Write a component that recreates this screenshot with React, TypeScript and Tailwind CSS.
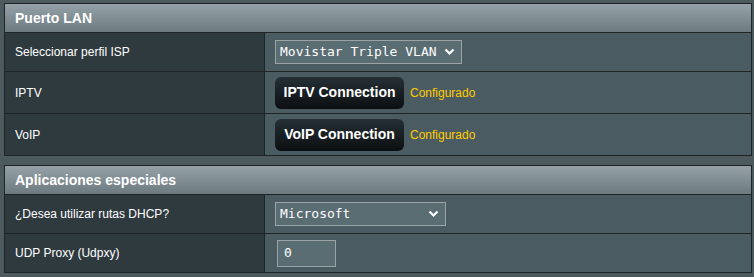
import { ReactNode } from "react";

function Chevron() {
  return (
    <svg width="11" height="8" viewBox="0 0 11 8" className="shrink-0">
      <path d="M1.5 1.5 L5.5 5.5 L9.5 1.5" fill="none" stroke="#ffffff" strokeWidth="2.2" />
    </svg>
  );
}

function Row({ label, h, children }: { label: string; h: string; children: ReactNode }) {
  return (
    <div className={`flex border-t border-[#1f2427] ${h}`}>
      <div className="w-[260px] shrink-0 bg-[#2f3a3f] border-r border-[#1f2427] flex items-center pl-[10px] text-[12px] text-white">
        {label}
      </div>
      <div className="flex-1 bg-[#4a5b61] flex items-center pl-[10px] gap-[6px]">{children}</div>
    </div>
  );
}

function Header({ title }: { title: string }) {
  return (
    <div className="h-[28px] bg-gradient-to-b from-[#95a1a6] to-[#6d7b80] flex items-center pl-[10px] text-[14px] font-bold text-white">
      {title}
    </div>
  );
}

function Select({ value, w }: { value: string; w: string }) {
  return (
    <div
      className={`${w} h-[24px] border border-[#9aa3a6] bg-[#5a6d73] flex items-center justify-between pl-[4px] pr-[6px] text-[13px] text-white`}
      style={{ fontFamily: '"DejaVu Sans Mono", "Liberation Mono", monospace' }}
    >
      <span>{value}</span>
      <Chevron />
    </div>
  );
}

function ConnButton({ label }: { label: string }) {
  return (
    <>
      <div className="w-[129px] h-[32px] rounded-[6px] bg-gradient-to-b from-[#253036] to-[#0c0f11] flex items-center justify-center text-[14px] font-bold text-white whitespace-nowrap">
        {label}
      </div>
      <span className="text-[12px] text-[#ffcc00]">Configurado</span>
    </>
  );
}

export default function App() {
  return (
    <div
      className="w-[754px] h-[277px] bg-[#4c595d] pt-[3px] pl-[4px] pr-[2px] flex flex-col gap-[9px]"
      style={{ fontFamily: '"Liberation Sans", Arial, sans-serif' }}
    >
      <div className="border border-[#1f2427]">
        <Header title="Puerto LAN" />
        <Row label="Seleccionar perfil ISP" h="h-[39px]">
          <Select value="Movistar Triple VLAN" w="w-[187px]" />
        </Row>
        <Row label="IPTV" h="h-[42px]">
          <ConnButton label="IPTV Connection" />
        </Row>
        <Row label="VoIP" h="h-[42px]">
          <ConnButton label="VoIP Connection" />
        </Row>
      </div>
      <div className="border border-[#1f2427]">
        <Header title="Aplicaciones especiales" />
        <Row label="¿Desea utilizar rutas DHCP?" h="h-[39px]">
          <Select value="Microsoft" w="w-[171px]" />
        </Row>
        <Row label="UDP Proxy (Udpxy)" h="h-[39px]">
          <div
            className="ml-[2px] w-[59px] h-[27px] border border-[#9aa3a6] bg-[#5a6d73] flex items-center pl-[6px] text-[13px] text-white"
            style={{ fontFamily: '"DejaVu Sans Mono", "Liberation Mono", monospace' }}
          >
            0
          </div>
        </Row>
      </div>
    </div>
  );
}
